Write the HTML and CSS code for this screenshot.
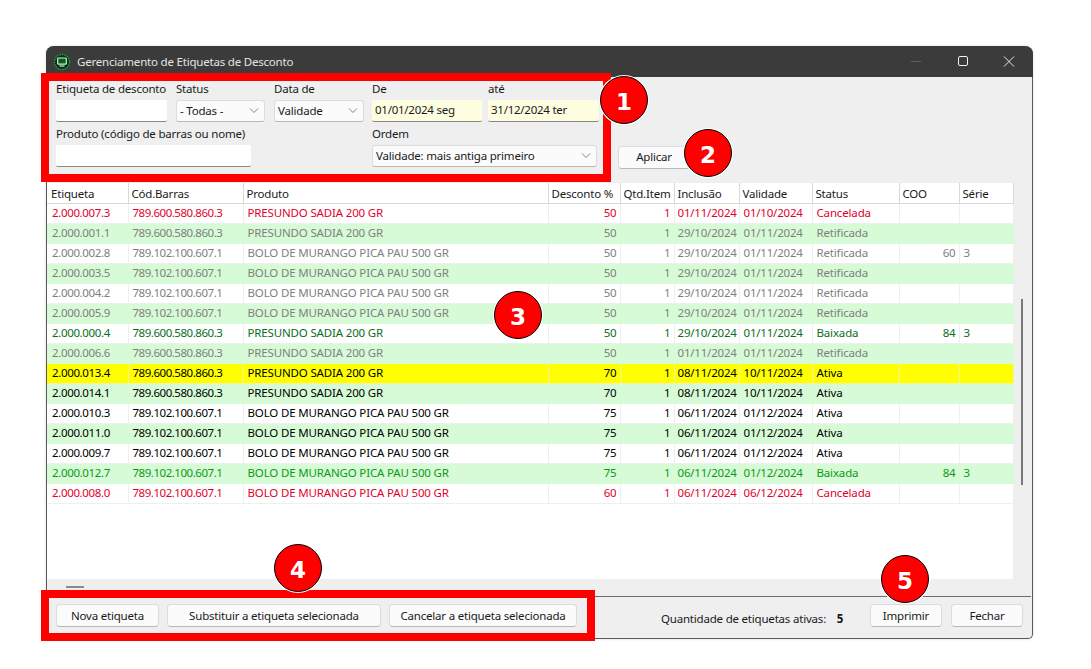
FILE: index.html
```html
<!DOCTYPE html>
<html lang="pt-BR">
<head>
  <meta charset="UTF-8">
  <meta name="viewport" content="width=device-width, initial-scale=1.0">
  <title>Gerenciamento de Etiquetas de Desconto</title>
  <link rel="stylesheet" href="styles.css">
</head>
<body>
  <div class="window">
    <div class="titlebar">
      <svg class="app-icon" width="18" height="18" viewBox="0 0 18 18">
        <circle cx="9" cy="9" r="7.5" fill="#0a2e12" stroke="#1fa83a" stroke-width="1.4" stroke-dasharray="1.5 1"/>
        <rect x="4.7" y="5" width="8.6" height="6.2" rx="0.8" fill="#0f5a20" stroke="#c8f5cc" stroke-width="1.2"/>
        <rect x="6.5" y="12.4" width="5" height="1.2" fill="#c8f5cc"/>
      </svg>
      <span class="title-text">Gerenciamento de Etiquetas de Desconto</span>
      <div class="win-buttons">
        <svg width="46" height="31" viewBox="0 0 46 31"><path d="M17 15.5h10" stroke="#5c5c5c"/></svg>
        <svg width="46" height="31" viewBox="0 0 46 31"><rect x="18.5" y="10.5" width="9" height="9" rx="1.5" fill="none" stroke="#f0f0f0"/></svg>
        <svg width="46" height="31" viewBox="0 0 46 31"><path d="M18 10.5l10 10M28 10.5l-10 10" stroke="#e8e8e8"/></svg>
      </div>
    </div>

    <div class="filters">
      <div class="filter-grid">
        <div class="field f-etiqueta">
          <label>Etiqueta de desconto</label>
          <input class="text-input" type="text">
        </div>
        <div class="field f-status">
          <label>Status</label>
          <div class="select">- Todas -
            <svg class="chevron" width="10" height="6" viewBox="0 0 10 6"><path d="M1 0.5L5 4.5l4-4" fill="none" stroke="#808080"/></svg>
          </div>
        </div>
        <div class="field f-data">
          <label>Data de</label>
          <div class="select">Validade
            <svg class="chevron" width="10" height="6" viewBox="0 0 10 6"><path d="M1 0.5L5 4.5l4-4" fill="none" stroke="#808080"/></svg>
          </div>
        </div>
        <div class="field f-de">
          <label>De</label>
          <input class="text-input date-input" type="text" value="01/01/2024 seg">
        </div>
        <div class="field f-ate">
          <label>até</label>
          <input class="text-input date-input" type="text" value="31/12/2024 ter">
        </div>
        <div class="field f-produto">
          <label>Produto (código de barras ou nome)</label>
          <input class="text-input" type="text">
        </div>
        <div class="field f-ordem">
          <label>Ordem</label>
          <div class="select">Validade: mais antiga primeiro
            <svg class="chevron" width="10" height="6" viewBox="0 0 10 6"><path d="M1 0.5L5 4.5l4-4" fill="none" stroke="#808080"/></svg>
          </div>
        </div>
      </div>
      <button class="button apply-button">Aplicar</button>
    </div>

    <div class="grid-area">
      <div class="table-wrap">
        <table class="labels">
          <colgroup>
            <col class="c-etiqueta"><col class="c-barras"><col class="c-produto"><col class="c-desconto"><col class="c-qtd">
            <col class="c-inclusao"><col class="c-validade"><col class="c-status"><col class="c-coo"><col class="c-serie">
          </colgroup>
          <thead>
            <tr><th>Etiqueta</th><th>Cód.Barras</th><th>Produto</th><th>Desconto %</th><th>Qtd.Item</th><th>Inclusão</th><th>Validade</th><th>Status</th><th>COO</th><th>Série</th></tr>
          </thead>
          <tbody>
            <tr class="red"><td>2.000.007.3</td><td>789.600.580.860.3</td><td>PRESUNDO SADIA 200 GR</td><td class="num">50</td><td class="num">1</td><td>01/11/2024</td><td>01/10/2024</td><td>Cancelada</td><td></td><td></td></tr>
            <tr class="alt grey"><td>2.000.001.1</td><td>789.600.580.860.3</td><td>PRESUNDO SADIA 200 GR</td><td class="num">50</td><td class="num">1</td><td>29/10/2024</td><td>01/11/2024</td><td>Retificada</td><td></td><td></td></tr>
            <tr class="grey"><td>2.000.002.8</td><td>789.102.100.607.1</td><td>BOLO DE MURANGO PICA PAU 500 GR</td><td class="num">50</td><td class="num">1</td><td>29/10/2024</td><td>01/11/2024</td><td>Retificada</td><td class="num">60</td><td>3</td></tr>
            <tr class="alt grey"><td>2.000.003.5</td><td>789.102.100.607.1</td><td>BOLO DE MURANGO PICA PAU 500 GR</td><td class="num">50</td><td class="num">1</td><td>29/10/2024</td><td>01/11/2024</td><td>Retificada</td><td></td><td></td></tr>
            <tr class="grey"><td>2.000.004.2</td><td>789.102.100.607.1</td><td>BOLO DE MURANGO PICA PAU 500 GR</td><td class="num">50</td><td class="num">1</td><td>29/10/2024</td><td>01/11/2024</td><td>Retificada</td><td></td><td></td></tr>
            <tr class="alt grey"><td>2.000.005.9</td><td>789.102.100.607.1</td><td>BOLO DE MURANGO PICA PAU 500 GR</td><td class="num">50</td><td class="num">1</td><td>29/10/2024</td><td>01/11/2024</td><td>Retificada</td><td></td><td></td></tr>
            <tr class="green"><td>2.000.000.4</td><td>789.600.580.860.3</td><td>PRESUNDO SADIA 200 GR</td><td class="num">50</td><td class="num">1</td><td>29/10/2024</td><td>01/11/2024</td><td>Baixada</td><td class="num">84</td><td>3</td></tr>
            <tr class="alt grey"><td>2.000.006.6</td><td>789.600.580.860.3</td><td>PRESUNDO SADIA 200 GR</td><td class="num">50</td><td class="num">1</td><td>01/11/2024</td><td>01/11/2024</td><td>Retificada</td><td></td><td></td></tr>
            <tr class="selected"><td>2.000.013.4</td><td>789.600.580.860.3</td><td>PRESUNDO SADIA 200 GR</td><td class="num">70</td><td class="num">1</td><td>08/11/2024</td><td>10/11/2024</td><td>Ativa</td><td></td><td></td></tr>
            <tr class="alt"><td>2.000.014.1</td><td>789.600.580.860.3</td><td>PRESUNDO SADIA 200 GR</td><td class="num">70</td><td class="num">1</td><td>08/11/2024</td><td>10/11/2024</td><td>Ativa</td><td></td><td></td></tr>
            <tr><td>2.000.010.3</td><td>789.102.100.607.1</td><td>BOLO DE MURANGO PICA PAU 500 GR</td><td class="num">75</td><td class="num">1</td><td>06/11/2024</td><td>01/12/2024</td><td>Ativa</td><td></td><td></td></tr>
            <tr class="alt"><td>2.000.011.0</td><td>789.102.100.607.1</td><td>BOLO DE MURANGO PICA PAU 500 GR</td><td class="num">75</td><td class="num">1</td><td>06/11/2024</td><td>01/12/2024</td><td>Ativa</td><td></td><td></td></tr>
            <tr><td>2.000.009.7</td><td>789.102.100.607.1</td><td>BOLO DE MURANGO PICA PAU 500 GR</td><td class="num">75</td><td class="num">1</td><td>06/11/2024</td><td>01/12/2024</td><td>Ativa</td><td></td><td></td></tr>
            <tr class="alt green-light"><td>2.000.012.7</td><td>789.102.100.607.1</td><td>BOLO DE MURANGO PICA PAU 500 GR</td><td class="num">75</td><td class="num">1</td><td>06/11/2024</td><td>01/12/2024</td><td>Baixada</td><td class="num">84</td><td>3</td></tr>
            <tr class="red"><td>2.000.008.0</td><td>789.102.100.607.1</td><td>BOLO DE MURANGO PICA PAU 500 GR</td><td class="num">60</td><td class="num">1</td><td>06/11/2024</td><td>06/12/2024</td><td>Cancelada</td><td></td><td></td></tr>
          </tbody>
        </table>
      </div>
      <div class="scroll-track"><div class="scroll-thumb"></div></div>
    </div>

    <div class="hscroll"><div class="hscroll-thumb"></div></div>

    <div class="footer">
      <div class="footer-left">
        <button class="button btn-nova">Nova etiqueta</button>
        <button class="button btn-subst">Substituir a etiqueta selecionada</button>
        <button class="button btn-cancel">Cancelar a etiqueta selecionada</button>
      </div>
      <div class="count">Quantidade de etiquetas ativas: <b>5</b></div>
      <div class="footer-right">
        <button class="button btn-small">Imprimir</button>
        <button class="button btn-small">Fechar</button>
      </div>
    </div>

    <!-- anotacoes por cima da janela -->
    <div class="frame frame-top"></div>
    <div class="frame frame-bottom"></div>
    <div class="badge badge-1">1</div>
    <div class="badge badge-2">2</div>
    <div class="badge badge-3">3</div>
    <div class="badge badge-4">4</div>
    <div class="badge badge-5">5</div>
  </div>
</body>
</html>
```

FILE: styles.css
```css
* {
  margin: 0;
  padding: 0;
  box-sizing: border-box;
}

body {
  font-family: "Noto Sans", "Open Sans", Arial, sans-serif;
  font-size: 11.5px;
  letter-spacing: -0.2px;
  color: #1a1a1a;
  background-color: white;
  height: 669px;
  overflow: hidden;
}

.window {
  position: relative;
  width: 987px;
  height: 593px;
  margin: 46px 0 0 46px;
  background-color: #efefef;
  border: 1px solid #5a5a5a;
  border-top: none;
  border-radius: 8px 8px 5px 5px;
  box-shadow: 0 0 3px rgba(0, 0, 0, 0.15);
}

.titlebar {
  display: flex;
  align-items: center;
  height: 31px;
  margin: 0 -1px;
  padding-left: 7px;
  background-color: #3b3b3b;
  border-radius: 8px 8px 0 0;
}

.app-icon {
  margin-right: 6px;
}

.title-text {
  color: #e4e4e4;
}

.win-buttons {
  display: flex;
  margin-left: auto;
  padding-right: 1px;
}

/* filtros */
.filters {
  position: relative;
  height: 106px;
  padding: 4px 0 0 9px;
  display: flex;
}

.filter-grid {
  display: grid;
  grid-template-columns: 111px 89px 90px 109px 109px;
  grid-template-rows: 42px 44px;
  column-gap: 9px;
  width: 541px;
}

.field label {
  display: block;
  height: 19px;
  line-height: 16px;
  white-space: nowrap;
}

.f-etiqueta { grid-column: 1; grid-row: 1; }
.f-status { grid-column: 2; grid-row: 1; }
.f-data { grid-column: 3; grid-row: 1; }
.f-de { grid-column: 4; grid-row: 1; margin-left: -1px; }
.f-ate { grid-column: 5; grid-row: 1; margin-left: -3px; margin-right: 1px; }
.f-produto { grid-column: 1 / 4; grid-row: 2; width: 195px; }
.f-ordem { grid-column: 4 / 6; grid-row: 2; margin-left: -1px; width: 225px; }

.f-produto label, .f-ordem label {
  height: 22px;
  line-height: 22px;
}

.text-input {
  display: block;
  width: 100%;
  height: 22px;
  padding: 0 3px 2px;
  font: inherit;
  letter-spacing: -0.25px;
  color: #1a1a1a;
  background-color: white;
  border: none;
  border-bottom: 1px solid #8a8a8a;
  border-radius: 2px;
}

.date-input {
  background-color: #fdfde0;
}

.select {
  display: flex;
  align-items: center;
  justify-content: space-between;
  height: 22px;
  padding: 0 5px 1px 3px;
  background-color: #fbfbfb;
  border: 1px solid #dcdcdc;
  border-bottom-color: #b8b8b8;
  border-radius: 3px;
}

.chevron {
  flex: none;
}

.button {
  font: inherit;
  letter-spacing: inherit;
  color: #1a1a1a;
  background-color: #fbfbfb;
  border: 1px solid #dcdcdc;
  border-bottom-color: #b8b8b8;
  border-radius: 4px;
  height: 23px;
}

.apply-button {
  width: 72px;
  margin: 65px 0 0 21px;
  padding-bottom: 2px;
}

/* grade */
.grid-area {
  display: flex;
  height: 396px;
}

.table-wrap {
  width: 966px;
  background-color: white;
}

.scroll-track {
  width: 19px;
  position: relative;
}

.scroll-thumb {
  position: absolute;
  left: 8px;
  top: 116px;
  width: 2px;
  height: 186px;
  background-color: #7a7a7a;
}

.labels {
  width: 966px;
  table-layout: fixed;
  border-collapse: collapse;
}

.c-etiqueta { width: 81px; }
.c-barras { width: 115px; }
.c-produto { width: 305px; }
.c-desconto { width: 72px; }
.c-qtd { width: 54px; }
.c-inclusao { width: 65px; }
.c-validade { width: 73px; }
.c-status { width: 87px; }
.c-coo { width: 60px; }
.c-serie { width: 54px; }

.labels th {
  height: 20px;
  padding: 1px 4px 0 3px;
  text-align: left;
  font-weight: normal;
  color: #1a1a1a;
  border-right: 1px solid #d8d8d8;
  border-bottom: 1px solid #d8d8d8;
  white-space: nowrap;
  overflow: hidden;
}

.labels th:first-child {
  padding-left: 4px;
}

.labels td {
  height: 20px;
  padding: 0 4px 1px 4px;
  letter-spacing: -0.16px;
  color: black;
  border-right: 1px solid #efefef;
  border-bottom: 1px solid #efefef;
  white-space: nowrap;
}

.labels td:nth-child(1) {
  padding-left: 5px;
  letter-spacing: -0.36px;
}

.labels td:nth-child(2) {
  letter-spacing: -0.47px;
}

.labels td:nth-child(6),
.labels td:nth-child(7) {
  letter-spacing: -0.2px;
}

.labels td:nth-child(6) {
  padding-left: 3px;
}

.labels td.num {
  text-align: right;
  padding-right: 3px;
}

.labels tr.alt td {
  background-color: #d6fbd6;
  border-color: #d6fbd6;
}

.labels tr.selected td {
  background-color: #ffff00;
  border-color: #f4f4a0;
}

.labels tr.red td { color: #e4002b; }
.labels tr.grey td { color: #808080; }
.labels tr.green td { color: #0a6e1e; }
.labels tr.green-light td { color: #0c9a14; }

.hscroll {
  height: 17px;
  position: relative;
}

.hscroll-thumb {
  position: absolute;
  left: 19px;
  top: 7px;
  width: 18px;
  height: 2px;
  background-color: #8a8a8a;
}

/* rodape */
.footer {
  display: flex;
  align-items: flex-start;
  height: 42px;
  margin-right: 1px;
  padding: 7px 8px 0 9px;
  border-top: 1px solid #6e6e6e;
}

.footer-left {
  display: flex;
  gap: 8px;
}

.btn-nova { width: 103px; }
.btn-subst { width: 214px; }
.btn-cancel { width: 188px; }

.count {
  margin: 7px 0 0 84px;
  white-space: nowrap;
}

.count b {
  margin-left: 8px;
}

.footer-right {
  display: flex;
  gap: 9px;
  margin-left: auto;
}

.btn-small { width: 72px; }

/* marcacoes vermelhas */
.frame {
  position: absolute;
  border: 8px solid #ff0000;
}

.frame-top {
  left: -6px;
  top: 27px;
  width: 570px;
  height: 109px;
}

.frame-bottom {
  left: -6px;
  top: 544px;
  width: 554px;
  height: 51px;
}

.badge {
  position: absolute;
  width: 48px;
  height: 48px;
  padding-top: 3px;
  display: flex;
  align-items: center;
  justify-content: center;
  font-family: "DejaVu Sans", sans-serif;
  font-size: 23px;
  font-weight: bold;
  letter-spacing: 0;
  color: white;
  background-color: #ff0000;
  border: 1px solid black;
  border-radius: 50%;
  box-shadow: 0 0 0 1px white;
}

.badge-1 { left: 553px; top: 30px; }
.badge-2 { left: 637px; top: 83px; }
.badge-3 { left: 447px; top: 245px; }
.badge-4 { left: 227px; top: 498px; }
.badge-5 { left: 834px; top: 509px; }
```
